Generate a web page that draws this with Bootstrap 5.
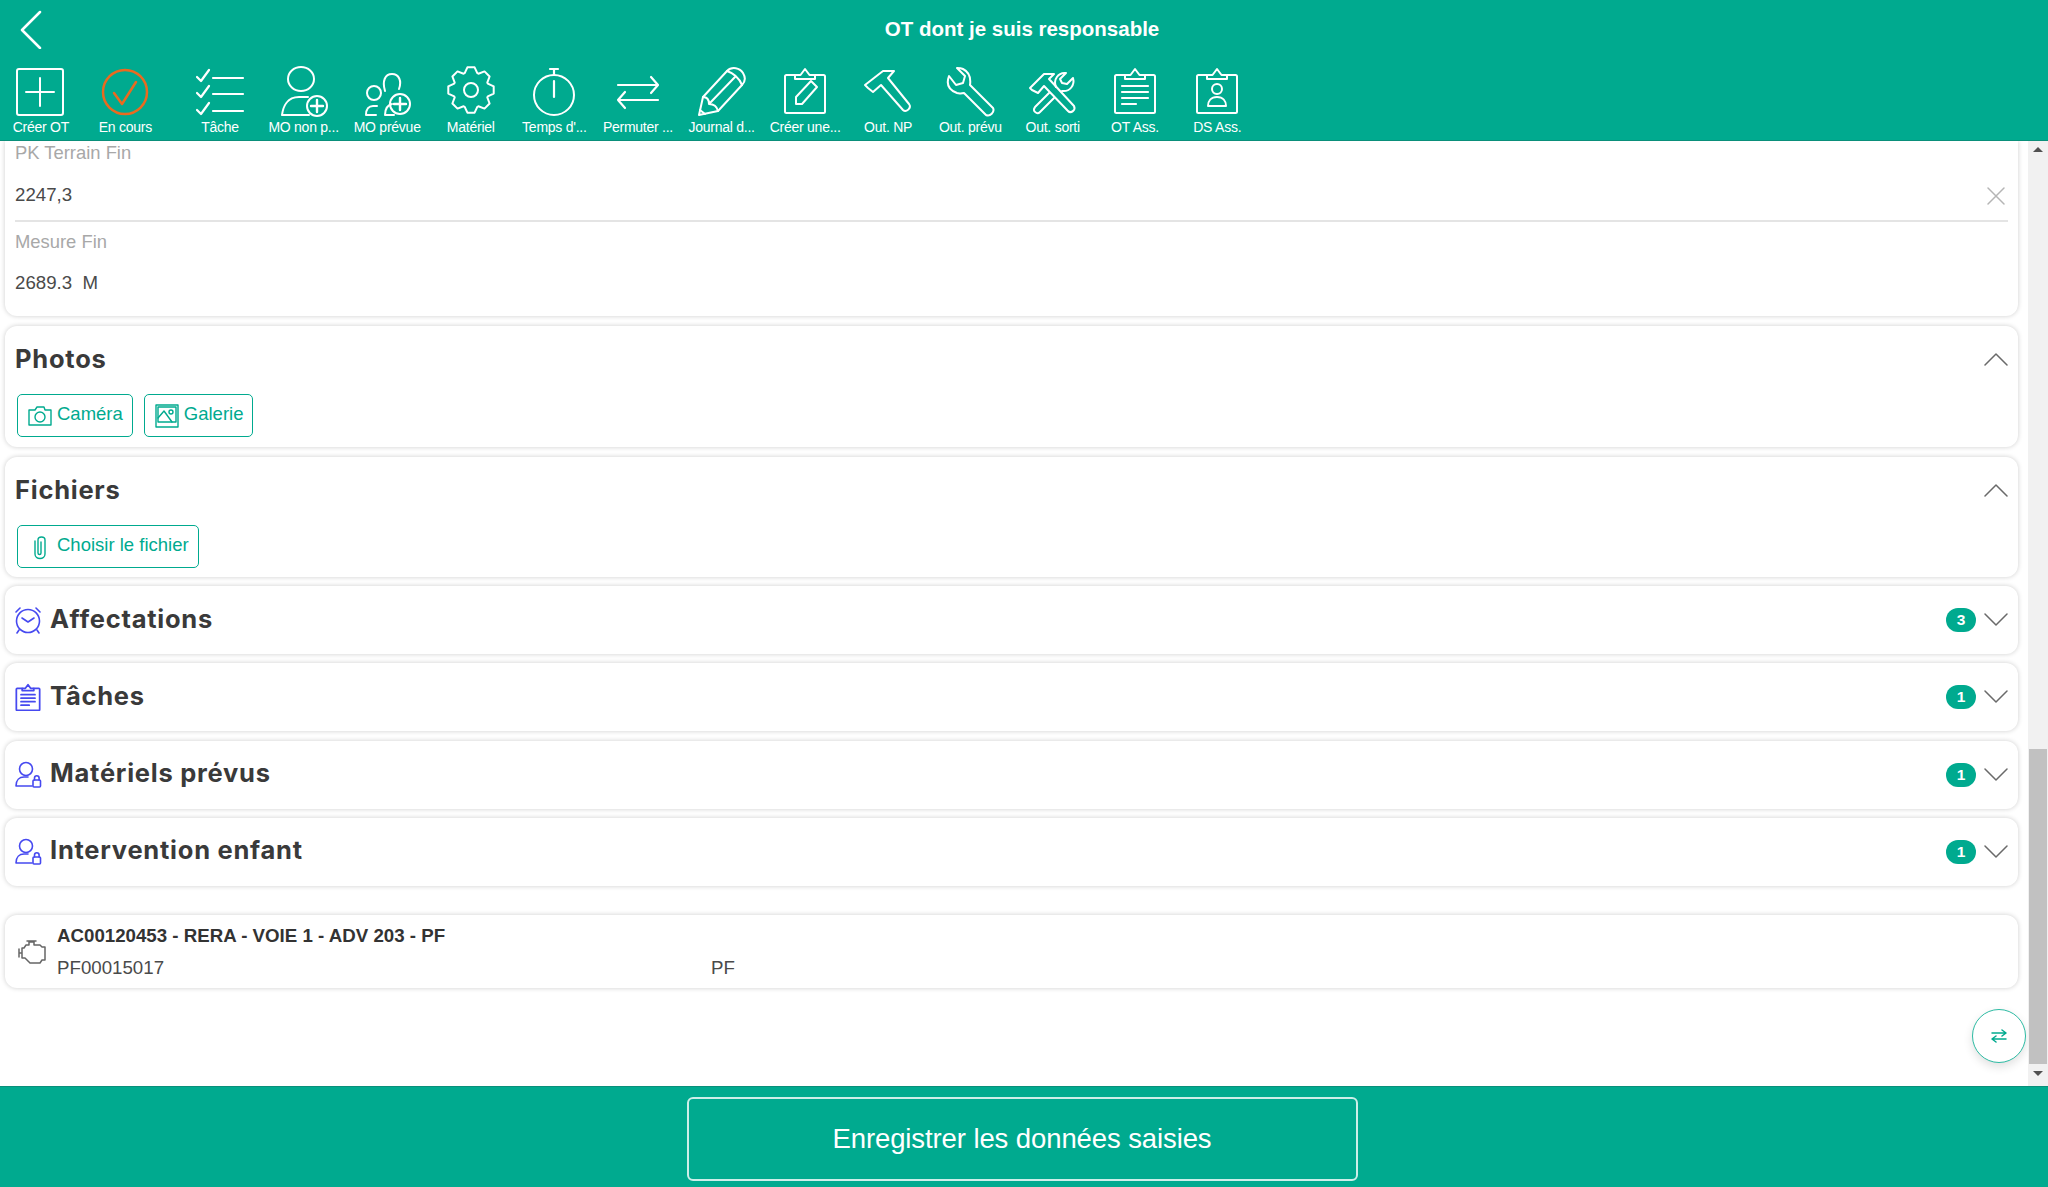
<!doctype html>
<html lang="fr">
<head>
<meta charset="utf-8">
<title>OT dont je suis responsable</title>
<link href="https://cdn.jsdelivr.net/npm/bootstrap@5.3.0/dist/css/bootstrap.min.css" rel="stylesheet">
<style>
html,body{height:100%;overflow:hidden}
body{font-family:"Liberation Sans",Arial,sans-serif;color:#333;background:#fff}
.app-shell{height:1187px}
.app-head{background:#00aa8f;height:141px;flex:none;color:#fff;border-bottom:1px solid #0a8f7a}
.head-top{height:66px;padding-left:18px}
.head-title{font-size:20.5px;font-weight:700;margin-top:-7px;padding-right:4px}
.back-link{width:26px;height:40px;margin-top:-8px}
.tool-row{height:74px}
.tool-item{width:83.6px;flex:none;text-align:center}
.tool-tight{width:82.3px}
.tool-item svg{display:block;margin:0 auto;width:52px;height:52px}
.tool-first{margin-left:-1px}
.tool-second{margin-left:1px}
.tool-gap{margin-right:11px}
.tool-label{font-size:14px;letter-spacing:-.25px;line-height:18px;white-space:nowrap}
.scroll-area{min-height:0}
.scroll-body{min-width:0;overflow:hidden;padding:0 10px 0 5px}
.fake-track{width:20px;flex:none;background:#f1f1f1;padding:0 1px}
.fake-space{height:584px}
.fake-thumb{flex:1 1 auto;background:#c1c1c1}
.arrow-up{height:18px;flex:none;margin-top:6px}
.arrow-down{height:22px;flex:none}
.arrow-up:before,.arrow-down:before{content:"";display:block;width:0;margin:0 auto;border:5px solid transparent}
.arrow-up:before{border-bottom:5px solid #505050;border-top:0}
.arrow-down:before{border-top:5px solid #505050;border-bottom:0;margin-top:7px}
.sheet{border:0;border-radius:12px;box-shadow:0 0 5px rgba(0,0,0,.2);margin-bottom:10px;padding:0 10px;background:#fff}
.sheet-first{border-top-left-radius:0;border-top-right-radius:0;padding-bottom:21px}
.field-label{font-size:18.4px;line-height:24px;color:#a8a8a8}
.field-value{font-size:18.67px;line-height:24px;margin-top:17px;color:#4a4a4a}
.field-first{margin-top:18px}
.field-one{padding-bottom:13px;border-bottom:2px solid #e4e4e4;margin-bottom:8px}
.clear-x{width:20px;height:20px;right:2px;top:45px;stroke:#b5b5b5}
.sheet-open{padding:15px 10px 10px}
.sheet-tail{padding-bottom:9px;margin-bottom:9px}
.sheet-title{font-family:Inter,sans-serif;font-size:25.5px;font-weight:700;line-height:36px;color:#3a3a3a;letter-spacing:.75px}
.btn-line{height:43px;border:1.5px solid #00aa8f;border-radius:5px;color:#00aa8f;font-size:18.5px;padding:0 9px;background:#fff;gap:4px;margin-left:2px;line-height:1}
.btn-line svg{width:26px;height:26px;flex:none}
.btn-line span{position:relative;top:-1px}
.btn-row{margin-top:17px;gap:9px}
.sheet-closed{height:68px;margin-bottom:9.33px;padding:0 10px 0 9px}
.sheet-closed .sheet-title{margin-top:-3px}
.sheet-closed svg.lead-ico{width:28px;height:28px;flex:none;stroke:#4649f0;margin-right:8px}
.count-pill{width:30px;height:24px;border-radius:12px;background:#00aa8f;color:#fff;font-size:15.5px;font-weight:700;line-height:24px;text-align:center}
.chev{width:24px;height:14px;stroke:#6a6a6a;margin-left:8px;flex:none}
.sheet-spacer{height:20px}
.equip{height:73px;padding:0 12px;margin-bottom:0}
.equip-ico{width:30px;height:26px;stroke:#666;flex:none;margin-right:10px}
.equip-name{font-size:18.7px;font-weight:700;line-height:24px;color:#333}
.equip-code{font-size:18.7px;line-height:24px;color:#4a4a4a;margin-top:8px}
.equip-col{width:654px}
.float-swap{width:54px;height:54px;right:2px;bottom:23px;border:1.5px solid #2dbba3;background:#fff;box-shadow:0 4px 10px rgba(0,0,0,.12)}
.float-swap svg{width:16px;height:14px;stroke:#00aa8f}
.float-anchor{right:0;bottom:0;left:0;height:0}
.app-foot{height:101px;background:#00aa8f;flex:none;padding:10px 4px 0 0;border-top:1px solid #0a8f7a}
.save-btn{width:671px;height:84px;border:2px solid rgba(255,255,255,.8);border-radius:6px;background:transparent;color:#fff;font-size:27.5px;letter-spacing:-.1px}
svg.wico{fill:none;stroke:#fff;stroke-width:2;stroke-linecap:round;stroke-linejoin:round}
svg.blue{fill:none;stroke-width:1.6;stroke-linecap:round;stroke-linejoin:round}
svg.blue-board{stroke-width:3}
svg.tl{fill:none;stroke:#00aa8f;stroke-width:1.4;stroke-linecap:round;stroke-linejoin:round}
svg.thin{fill:none;stroke-width:1.5;stroke-linecap:round;stroke-linejoin:round}
</style>
</head>
<body>
<svg class="d-none" xmlns="http://www.w3.org/2000/svg">
  <symbol id="board" viewBox="0 0 48 48"><path d="M14 9H5.500A1.500 1.500 0 0 0 4 10.500V45.500A1.500 1.500 0 0 0 5.500 47H42.500A1.500 1.500 0 0 0 44 45.500V10.500A1.500 1.500 0 0 0 42.500 9H34"/><path d="M14 13V10a1 1 0 0 1 1-1h4.500L24 3l4.500 6H33a1 1 0 0 1 1 1v3z"/></symbol>
  <symbol id="personlock" viewBox="0 0 28 28"><circle cx="12" cy="8" r="6.500"/><path d="M18 25H2c0-6 3.500-9 8-9h4"/><rect x="19" y="19" width="7.500" height="7" rx="1"/><path d="M20.500 19v-2a2.300 2.300 0 0 1 4.600 0v2"/></symbol>
  <symbol id="up" viewBox="0 0 24 14"><path d="M1 13 12 2l11 11" fill="none"/></symbol>
  <symbol id="down" viewBox="0 0 24 14"><path d="M1 1l11 11L23 1" fill="none"/></symbol>
</svg>

<div class="app-shell d-flex flex-column">
  <header class="app-head d-flex flex-column">
    <div class="head-top d-flex align-items-center position-relative">
      <svg class="wico back-link" viewBox="0 0 26 40"><path d="M22 3 4 21l18 18" stroke-width="2.500"/></svg>
      <div class="head-title position-absolute start-0 end-0 text-center">OT dont je suis responsable</div>
    </div>
    <div class="tool-row d-flex">
      <div class="tool-item tool-first"><svg class="wico" viewBox="0 0 52 52"><rect x="2" y="3" width="46" height="46" rx="2"/><path d="M25 12v28M11 26h28"/></svg><div class="tool-label">Créer OT</div></div>
      <div class="tool-item tool-gap tool-second"><svg class="wico" viewBox="0 0 52 52"><circle cx="26" cy="26" r="22" stroke="#ea6a1f" stroke-width="2.500"/><path d="M15 27l8 11 14-22" stroke="#ea6a1f" stroke-width="2.500"/></svg><div class="tool-label">En cours</div></div>
      <div class="tool-item"><svg class="wico" viewBox="0 0 52 52"><path d="M3 11l4 4 8-11M3 27l4 4 8-11M3 44l4 4 8-11M19 12h30M19 28h30M19 45h30" stroke-width="2.200"/></svg><div class="tool-label">Tâche</div></div>
      <div class="tool-item"><svg class="wico" viewBox="0 0 52 52"><ellipse cx="23" cy="13" rx="13" ry="12"/><path d="M30 31H21C9 31 5 41 4 49H31"/><circle cx="39" cy="40" r="10"/><path d="M39 34v12M33 40h12" stroke-width="2.400"/></svg><div class="tool-label">MO non p...</div></div>
      <div class="tool-item"><svg class="wico" viewBox="0 0 52 52"><circle cx="13" cy="27" r="7"/><path d="M15 49H5c0-6 3-9 7-9h4"/><path d="M24 25c-3-10 0-17 7-17s10 7 7 15"/><path d="M33 49H24c0-6 3-10 7-11"/><circle cx="39" cy="38" r="10"/><path d="M39 32v12M33 38h12" stroke-width="2.400"/></svg><div class="tool-label">MO prévue</div></div>
      <div class="tool-item"><svg class="wico" viewBox="0 0 48 52"><polygon points="31.400,7.700 37.500,5.400 42.600,10.500 40.300,16.600 40.800,17.700 46.700,20.400 46.700,27.600 40.800,30.300 40.300,31.400 42.600,37.500 37.500,42.600 31.400,40.300 30.300,40.800 27.600,46.700 20.400,46.700 17.700,40.800 16.600,40.300 10.500,42.600 5.400,37.500 7.700,31.400 7.200,30.300 1.300,27.600 1.300,20.400 7.200,17.700 7.700,16.600 5.400,10.500 10.500,5.400 16.600,7.700 17.700,7.200 20.400,1.300 27.600,1.300 30.300,7.200"/><circle cx="24" cy="24" r="7"/></svg><div class="tool-label">Matériel</div></div>
      <div class="tool-item"><svg class="wico" viewBox="0 0 52 52"><circle cx="26" cy="29" r="20"/><path d="M26 9V3M22 3h8M26 15v16" stroke-width="2.200"/></svg><div class="tool-label">Temps d'...</div></div>
      <div class="tool-item"><svg class="wico" viewBox="0 0 52 52"><path d="M6 19h40M39 11l7 8-7 8M46 34H6M13 26l-7 8 7 8" stroke-width="2.200"/></svg><div class="tool-label">Permuter ...</div></div>
      <div class="tool-item"><svg class="wico" viewBox="0 0 52 52"><path d="M3 49 7 31 31 5C36 0 44 2 47 7C50 12 49 16 46 19L22 45Z"/><path d="M7 31C12 31 13 35 13 38C18 38 21 41 22 45M13 38 39 11M31 5C37 7 43 12 46 19M4 44l5 4"/></svg><div class="tool-label">Journal d...</div></div>
      <div class="tool-item"><svg class="wico" viewBox="0 0 52 52"><use href="#board" x="2" y="0" width="48" height="48"/><path d="M17 38v-7l15-16 6 6-15 17z"/></svg><div class="tool-label">Créer une...</div></div>
      <div class="tool-item tool-tight"><svg class="wico" viewBox="0 0 52 52"><path d="M6 22 3 19 21 5H32L26 12 47 38C50 42 44 47 41 44L19 19 11 26Z"/></svg><div class="tool-label">Out. NP</div></div>
      <div class="tool-item tool-tight"><svg class="wico" viewBox="0 0 52 52"><path d="M5 10c-3 8 0 14 8 17 3 1 5 0 7 0l22 22c4 2 9-3 7-7L26 19c1-7-1-13-7-16-2-1-4-1-6-1l8 8-2 7-7 2z"/></svg><div class="tool-label">Out. prévu</div></div>
      <div class="tool-item tool-tight"><svg class="wico" viewBox="0 0 52 52"><path d="M5 24 3 22 17 8H27L22 13 47 40C49 44 44 48 41 45L17 20 11 27Z"/><path d="M22 27 8 41C5 45 10 49 13 46L27 32M29 21C26 14 31 6 39 7L33 13 35 17 40 18 46 12C48 19 43 26 35 25"/></svg><div class="tool-label">Out. sorti</div></div>
      <div class="tool-item tool-tight"><svg class="wico" viewBox="0 0 52 52"><use href="#board" x="2" y="0" width="48" height="48"/><path d="M13 20h26M13 26h26M13 32h26M13 38h14" stroke-width="2.200"/></svg><div class="tool-label">OT Ass.</div></div>
      <div class="tool-item tool-tight"><svg class="wico" viewBox="0 0 52 52"><use href="#board" x="2" y="0" width="48" height="48"/><circle cx="26" cy="23" r="5"/><path d="M17 40c0-5 3-9 9-9s9 4 9 9z"/></svg><div class="tool-label">DS Ass.</div></div>
    </div>
  </header>

  <main class="scroll-area flex-grow-1 d-flex">
    <div class="scroll-body flex-grow-1 position-relative">
      <section class="card sheet sheet-first position-relative">
        <div class="field-one position-relative">
          <div class="field-label">PK Terrain Fin</div>
          <div class="field-value field-first">2247,3</div>
          <svg class="thin clear-x position-absolute" viewBox="0 0 20 20"><path d="M2 2l16 16M18 2 2 18"/></svg>
        </div>
        <div class="field-label">Mesure Fin</div>
        <div class="field-value">2689.3&nbsp; M</div>
      </section>

      <section class="card sheet sheet-open">
        <div class="d-flex justify-content-between align-items-center">
          <div class="sheet-title">Photos</div>
          <svg class="thin chev"><use href="#up"/></svg>
        </div>
        <div class="d-flex btn-row">
          <button class="btn btn-line d-flex align-items-center" type="button"><svg class="tl" viewBox="0 0 26 26"><path d="M2 7h6l2-3h7l1 3h6v15H2z"/><circle cx="13" cy="14" r="5"/></svg><span>Caméra</span></button>
          <button class="btn btn-line d-flex align-items-center" type="button"><svg class="tl" viewBox="0 0 26 26"><rect x="2" y="2" width="22" height="22"/><rect x="4" y="4" width="18" height="15"/><path d="M4 15l6-7 8 11"/><circle cx="17" cy="9" r="2"/></svg><span>Galerie</span></button>
        </div>
      </section>

      <section class="card sheet sheet-open sheet-tail">
        <div class="d-flex justify-content-between align-items-center">
          <div class="sheet-title">Fichiers</div>
          <svg class="thin chev"><use href="#up"/></svg>
        </div>
        <div class="d-flex btn-row">
          <button class="btn btn-line d-flex align-items-center" type="button"><svg class="tl" viewBox="0 0 26 26"><path d="M8 7v13c0 6 10 6 10 0V6c0-4-7-4-7 0v13c0 2 3 2 3 0V8"/></svg><span>Choisir le fichier</span></button>
        </div>
      </section>

      <section class="card sheet sheet-closed d-flex flex-row align-items-center">
        <svg class="blue lead-ico" viewBox="0 0 28 28"><circle cx="14" cy="15" r="11.500"/><path d="M8 12l6 4 6-4M2 6l4-4M26 6l-4-4M5 24l-2 3M23 24l2 3"/></svg>
        <div class="sheet-title flex-grow-1">Affectations</div>
        <div class="count-pill">3</div>
        <svg class="thin chev"><use href="#down"/></svg>
      </section>
      <section class="card sheet sheet-closed d-flex flex-row align-items-center">
        <svg class="blue blue-board lead-ico" viewBox="0 0 48 48"><use href="#board"/><path d="M12 20h24M12 26h24M12 32h24M12 38h14"/></svg>
        <div class="sheet-title flex-grow-1">Tâches</div>
        <div class="count-pill">1</div>
        <svg class="thin chev"><use href="#down"/></svg>
      </section>
      <section class="card sheet sheet-closed d-flex flex-row align-items-center">
        <svg class="blue lead-ico"><use href="#personlock"/></svg>
        <div class="sheet-title flex-grow-1">Matériels prévus</div>
        <div class="count-pill">1</div>
        <svg class="thin chev"><use href="#down"/></svg>
      </section>
      <section class="card sheet sheet-closed d-flex flex-row align-items-center">
        <svg class="blue lead-ico"><use href="#personlock"/></svg>
        <div class="sheet-title flex-grow-1">Intervention enfant</div>
        <div class="count-pill">1</div>
        <svg class="thin chev"><use href="#down"/></svg>
      </section>

      <div class="sheet-spacer"></div>

      <section class="card sheet equip d-flex flex-row align-items-center">
        <svg class="thin equip-ico" viewBox="0 0 30 26"><path d="M2 10v8M2 14h3M5 9v10h3l5 5h10l2-3h3V8h-3l-2-2H17V3h-5v3h-3L7 9zM10 2h9"/></svg>
        <div>
          <div class="equip-name">AC00120453 - RERA - VOIE 1 - ADV 203 - PF</div>
          <div class="equip-code d-flex"><div class="equip-col">PF00015017</div><div>PF</div></div>
        </div>
      </section>

      <div class="float-anchor position-absolute">
        <div class="float-swap position-absolute rounded-circle d-flex align-items-center justify-content-center">
          <svg class="thin" viewBox="0 0 16 14"><path d="M1 4h14M11 1l4 3-4 3M15 10H1M5 7l-4 3 4 3"/></svg>
        </div>
      </div>
    </div>
    <div class="fake-track d-flex flex-column">
      <div class="arrow-up"></div>
      <div class="fake-space"></div>
      <div class="fake-thumb"></div>
      <div class="arrow-down"></div>
    </div>
  </main>

  <footer class="app-foot d-flex justify-content-center">
    <button class="btn save-btn" type="button">Enregistrer les données saisies</button>
  </footer>
</div>
<script src="https://cdn.jsdelivr.net/npm/bootstrap@5.3.0/dist/js/bootstrap.bundle.min.js"></script>
</body>
</html>
